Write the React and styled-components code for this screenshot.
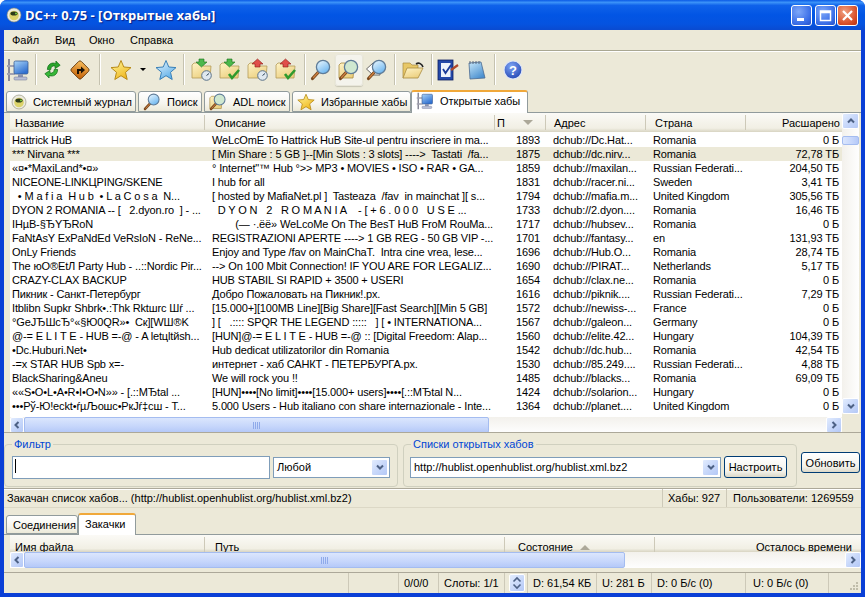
import React from 'react';
import styled, { createGlobalStyle } from 'styled-components';

const GlobalStyle = createGlobalStyle`
  html, body { margin: 0; padding: 0; overflow: hidden; background: #fff; }
  * { box-sizing: border-box; }
`;

const font = `"Liberation Sans", Arial, sans-serif`;
const columns = '195px 290px 51px 100px 100px 96px';

const hubs = [
  ['Hattrick HuB', 'WeLcOmE To Hattrick HuB Site-ul pentru inscriere in ma...', '1893', 'dchub://Dc.Hat...', 'Romania', '0 Б'],
  ['*** Nirvana ***', '[ Min Share : 5 GB ]--[Min Slots : 3 slots] ---->  Tastati  /fa...', '1875', 'dchub://dc.nirv...', 'Romania', '72,78 ТБ'],
  ['«¤•*MaxiLand*•¤»', '° Internet"™ Hub °>> MP3 • MOVIES • ISO • RAR • GA...', '1859', 'dchub://maxilan...', 'Russian Federati...', '204,50 ТБ'],
  ['NICEONE-LINKЦPING/SKENE', 'I hub for all', '1831', 'dchub://racer.ni...', 'Sweden', '3,41 ТБ'],
  ['  • M a f i a  H u b  • L a C o s a  N...', '[ hosted by MafiaNet.pl ]  Tasteaza  /fav  in mainchat ][ s...', '1794', 'dchub://mafia.m...', 'United Kingdom', '305,56 ТБ'],
  ['DYON 2 ROMANIA -- [   2.dyon.ro  ] - ...', '  D Y O N   2   R O M A N I A    - [ + 6 . 0 0 0   U S E ...', '1733', 'dchub://2.dyon....', 'Romania', '16,46 ТБ'],
  ['IHµB-§ЂYЂRoN', '        (— ·.ёё» WeLcoMe On The BesT HuB FroM RouMa...', '1717', 'dchub://hubsev...', 'Romania', '0 Б'],
  ['FaNtAsY ExPaNdEd VeRsIoN - ReNe...', 'REGISTRAZIONI APERTE ----> 1 GB REG - 50 GB VIP -...', '1701', 'dchub://fantasy...', 'en', '131,93 ТБ'],
  ['OnLy Friends', 'Enjoy and Type /fav on MainChaT.  Intra cine vrea, lese...', '1696', 'dchub://Hub.O...', 'Romania', '28,74 ТБ'],
  ['The юО®ЕtЛ Party Hub - ..::Nordic Pir...', '--> On 100 Mbit Connection! IF YOU ARE FOR LEGALIZ...', '1690', 'dchub://PIRAT...', 'Netherlands', '5,17 ТБ'],
  ['CRAZY-CLAX BACKUP', 'HUB STABIL SI RAPID + 3500 + USERI', '1654', 'dchub://clax.ne...', 'Romania', '0 Б'],
  ['Пикник - Санкт-Петербург', 'Добро Пожаловать на Пикник!.рх.', '1616', 'dchub://piknik....', 'Russian Federati...', '7,29 ТБ'],
  ['Itblibn Supkr Shbrk•.:Thk Rktшrc Шŕ ...', '[15.000+][100MB Line][Big Share][Fast Search][Min 5 GB]', '1572', 'dchub://newiss-...', 'France', '0 Б'],
  ['°GeJЂШcЂ°«§Ю0QR»•  Ск][WШ®K', '] [   .:::: SPQR THE LEGEND :::::   ] [ • INTERNATIONA...', '1567', 'dchub://galeon...', 'Germany', '0 Б'],
  ['@-= E L I T E - HUB =-@ - A letцltйsh...', '[HUN]@-= E L I T E - HUB =-@ :: [Digital Freedom: Alap...', '1560', 'dchub://elite.42...', 'Hungary', '104,39 ТБ'],
  ['•Dc.Huburi.Net•', 'Hub dedicat utilizatorilor din Romania', '1542', 'dchub://dc.hub...', 'Romania', '42,54 ТБ'],
  ['-=x STAR HUB Spb x=-', 'интернет - хаб САНКТ - ПЕТЕРБУРГА.рх.', '1530', 'dchub://85.249....', 'Russian Federati...', '4,88 ТБ'],
  ['BlackSharing&Aneu', 'We will rock you !!', '1485', 'dchub://blacks...', 'Romania', '69,09 ТБ'],
  ['««S•O•L•A•R•I•O•N»» - [.::MЂtal ...', '[HUN]••••[No limit]••••[15.000+ users]••••[.::MЂtal N...', '1424', 'dchub://solarion...', 'Hungary', '0 Б'],
  ['•••Pў-Ю!eckt•ŕµЉoшc•PкJŕ‡cш - T...', '5.000 Users - Hub italiano con share internazionale - Inte...', '1364', 'dchub://planet....', 'United Kingdom', '0 Б'],
];

/* window frame */
const Win = styled.div`
  width: 865px;
  height: 597px;
  display: flex;
  flex-direction: column;
  font: 11px ${font};
  color: #000;
  background: #0a3fd6;
  border-radius: 7px 7px 0 0;
  overflow: hidden;
`;
const TitleBar = styled.div`
  height: 30px;
  flex: none;
  display: flex;
  align-items: center;
  padding: 0 7px 0 6px;
  background: linear-gradient(180deg, #0a5ae6 0%, #3b92f8 8%, #0f62ea 18%, #0255e4 50%, #0553e0 80%, #0a4ad0 100%);
`;
const TitleText = styled.div`
  flex: 1;
  margin-left: 3px;
  font: bold 13px "Open Sans", sans-serif;
  color: #fff;
  text-shadow: 1px 1px 1px #0f1f80;
  white-space: nowrap;
`;
const WinBtn = styled.div`
  width: 21px;
  height: 21px;
  margin-left: ${p => p.$ml || 2}px;
  border: 1px solid #fff;
  border-radius: 3px;
  display: flex;
  align-items: center;
  justify-content: center;
  background: ${p => p.$close
    ? 'radial-gradient(circle at 35% 30%, #f0a080, #d8502a 65%, #b83010)'
    : 'radial-gradient(circle at 35% 30%, #7fa8f8, #3b6fe8 65%, #2650c8)'};
`;
const Client = styled.div`
  flex: 1;
  min-height: 0;
  margin: 0 4px 4px;
  background: #ece9d8;
  display: flex;
  flex-direction: column;
`;

/* menu and toolbar */
const MenuBar = styled.div`
  height: 21px;
  flex: none;
  display: flex;
  border-bottom: 1px solid #a9a792;
  box-shadow: 0 1px 0 #fff;
`;
const MenuItem = styled.div`
  width: ${p => p.$w}px;
  padding-left: ${p => p.$pl || 0}px;
  line-height: 20px;
`;
const ToolBar = styled.div`
  height: 39px;
  flex: none;
  padding-bottom: 2px;
  display: flex;
  align-items: center;
`;
const ToolBtn = styled.div`
  width: 28px;
  height: 32px;
  flex: none;
  display: flex;
  align-items: center;
  justify-content: center;
  border-radius: 3px;
  ${p => p.$hot && `
    background: #f4f3ec;
    box-shadow: inset 0 0 0 1px #e8e6da, 0 1px 1px #c8c6b6;
  `}
`;
const ToolSep = styled.div`
  width: 1px;
  height: 31px;
  flex: none;
  background: #c5c2b0;
  box-shadow: 1px 0 0 #fff;
  margin-left: ${p => p.$l}px;
  margin-right: ${p => p.$r}px;
`;
const DropMark = styled.div`
  width: 0;
  height: 0;
  flex: none;
  margin: 0 6px 0 5px;
  border-left: 3px solid transparent;
  border-right: 3px solid transparent;
  border-top: 3px solid #000;
`;

/* tabs */
const TabStrip = styled.div`
  height: ${p => p.$h || 23}px;
  flex: none;
  display: flex;
  align-items: flex-end;
  gap: 2px;
  padding-left: 2px;
  border-bottom: 1px solid #919b9c;
`;
const Tab = styled.div`
  width: ${p => p.$w}px;
  height: ${p => p.$h || (p.$active ? 23 : 21)}px;
  flex: none;
  display: flex;
  align-items: center;
  gap: ${p => p.$gap || 6}px;
  padding-left: ${p => p.$pl || 4}px;
  white-space: nowrap;
  border: 1px solid #919b9c;
  border-radius: 3px 3px 0 0;
  margin-left: ${p => (p.$active ? -2 : 0)}px;
  margin-bottom: ${p => (p.$active ? -1 : 0)}px;
  position: relative;
  background: ${p => (p.$active ? '#fff' : 'linear-gradient(180deg, #fff 0%, #f6f5ee 60%, #ece9d8 100%)')};
  ${p => p.$active && 'border-top: 2px solid #f0a83a; border-bottom: none; padding-bottom: 3px;'}
`;

/* list view */
const ListArea = styled.div`
  height: ${p => (p.$h ? `${p.$h}px` : 'auto')};
  flex: none;
  margin: 0 1px 0 6px;
  display: flex;
`;
const ListMain = styled.div`
  width: ${p => p.$w}px;
  flex: none;
  display: flex;
  flex-direction: column;
`;
const HeaderRow = styled.div`
  display: grid;
  grid-template-columns: ${p => p.$cols || columns};
  grid-auto-rows: ${p => (p.$clip ? 24 : p.$h || 19)}px;
  height: ${p => p.$h || 19}px;
  flex: none;
  background: linear-gradient(180deg, #fbfaf6 0%, #f1efe4 80%, #d8d4c2 100%);
  overflow: hidden;
`;
const HeaderCell = styled.div`
  display: flex;
  align-items: center;
  justify-content: ${p => (p.$right ? 'flex-end' : 'flex-start')};
  padding: 0 ${p => p.$pr || 0}px 0 ${p => p.$pl || 5}px;
  white-space: nowrap;
  border-right: ${p => (p.$last ? 'none' : '1px solid #cdc9b8')};
  margin: 2px 0;
`;
const SortMark = styled.span`
  width: 0;
  height: 0;
  margin-left: ${p => p.$ml || 7}px;
  border-left: 5px solid transparent;
  border-right: 5px solid transparent;
  ${p => (p.$up ? 'border-bottom: 5px solid #aca899;' : 'border-top: 5px solid #aca899;')}
`;
const Rows = styled.div`
  height: 285px;
  flex: none;
  background: #fff;
  padding-top: 1px;
`;
const Row = styled.div`
  display: grid;
  grid-template-columns: ${columns};
  height: 14px;
  background: ${p => (p.$sel ? '#ece9d8' : 'transparent')};
`;
const Cell = styled.div`
  line-height: 13px;
  letter-spacing: -0.14px;
  white-space: pre;
  overflow: hidden;
  text-align: ${p => (p.$right ? 'right' : 'left')};
  padding: 1px ${p => p.$pr || 0}px 0 ${p => p.$pl || 0}px;
`;

/* scrollbars */
const HScroll = styled.div`
  height: 16px;
  flex: none;
  display: flex;
  align-items: stretch;
  background: linear-gradient(180deg, #f3f1ec 0%, #fefefe 100%);
`;
const VScroll = styled.div`
  width: 17px;
  flex: none;
  display: flex;
  flex-direction: column;
  background: linear-gradient(90deg, #f3f1ec 0%, #fefefe 100%);
`;
const ScrollBtn = styled.div`
  width: ${p => p.$w || 16}px;
  height: 16px;
  flex: none;
  border: 1px solid #fff;
  border-radius: 2px;
  background: linear-gradient(135deg, #e2ecfe 0%, #c8d8fa 50%, #b4c8f6 100%);
  display: flex;
  align-items: center;
  justify-content: center;
`;
const Thumb = styled.div`
  flex: none;
  width: ${p => (p.$w ? `${p.$w}px` : '100%')};
  height: ${p => (p.$h ? `${p.$h}px` : '100%')};
  margin: ${p => p.$m || 0};
  border: 1px solid #a4bcf0;
  border-radius: 2px;
  background: ${p => (p.$v
    ? 'linear-gradient(90deg, #dbe6fd 0%, #c6d6fb 60%, #b5c9f8 100%)'
    : 'linear-gradient(180deg, #dbe6fd 0%, #c6d6fb 60%, #b5c9f8 100%)')};
  display: flex;
  align-items: center;
  justify-content: center;
  gap: 1px;
`;
const Grip = styled.i`
  width: 1px;
  height: 7px;
  background: #8faaea;
`;
const Fill = styled.div`
  flex: 1;
`;
const Corner = styled.div`
  height: 18px;
  flex: none;
  background: #ece9d8;
`;

/* filter panel */
const FilterPanel = styled.div`
  height: 56px;
  flex: none;
  display: flex;
  align-items: flex-start;
  padding-top: 11px;
  border-top: 1px solid #aca899;
`;
const GroupBox = styled.div`
  width: ${p => p.$w}px;
  height: 43px;
  flex: none;
  margin: 0 0 0 ${p => p.$ml || 0}px;
  padding: 0 0 0 ${p => p.$pl || 8}px;
  border: 1px solid #d0d0bf;
  border-radius: 4px;
  display: flex;
  align-items: center;
  position: relative;
`;
const Legend = styled.div`
  position: absolute;
  top: -7px;
  left: 7px;
  padding: 0 2px;
  background: #ece9d8;
  color: #0046d5;
  line-height: 13px;
`;
const TextInput = styled.div`
  width: 258px;
  height: 23px;
  flex: none;
  border: 1px solid #7f9db9;
  background: #fff;
  padding: 2px 0 0 2px;
  margin-top: 3px;
`;
const Caret = styled.div`
  width: 1px;
  height: 14px;
  background: #000;
`;
const Select = styled.div`
  width: ${p => p.$w}px;
  height: 21px;
  flex: none;
  margin-left: ${p => p.$ml || 0}px;
  margin-top: 3px;
  border: 1px solid #7f9db9;
  background: #fff;
  display: flex;
  align-items: center;
  padding-left: 3px;
  white-space: nowrap;
`;
const SelectText = styled.div`
  flex: 1;
`;
const SelectBtn = styled.div`
  width: 17px;
  height: 17px;
  margin-right: 1px;
  border: 1px solid #fff;
  border-radius: 2px;
  background: linear-gradient(135deg, #e2ecfe 0%, #c8d8fa 50%, #b4c8f6 100%);
  display: flex;
  align-items: center;
  justify-content: center;
`;
const Button = styled.div`
  width: ${p => p.$w}px;
  height: ${p => p.$h}px;
  flex: none;
  margin: ${p => p.$m || 0};
  border: 1px solid #003c74;
  border-radius: 3px;
  background: linear-gradient(180deg, #fff 0%, #f4f3ec 70%, #dcd8c8 100%);
  display: flex;
  align-items: center;
  justify-content: center;
`;

/* status bars */
const InfoBar = styled.div`
  height: 20px;
  flex: none;
  display: flex;
  align-items: center;
  border-top: 1px solid #aca899;
  box-shadow: inset 0 1px 0 #fff;
  border-bottom: 1px solid #dcd8c6;
`;
const StatusCell = styled.div`
  width: ${p => p.$w}px;
  height: 100%;
  flex: ${p => (p.$w ? 'none' : 1)};
  padding-left: ${p => p.$pl || 5}px;
  display: flex;
  align-items: center;
  white-space: nowrap;
  border-right: ${p => (p.$last ? 'none' : '1px solid #cdc9b8')};
`;
const SpinBox = styled.div`
  width: 16px;
  height: 18px;
  border: 1px solid #fff;
  border-radius: 2px;
  background: linear-gradient(135deg, #e2ecfe, #b4c8f6);
  display: flex;
  align-items: center;
  justify-content: center;
`;
const BottomBar = styled.div`
  height: 21px;
  flex: none;
  margin-top: auto;
  display: flex;
  border-top: 1px solid #aca899;
`;
const SizeGrip = styled.div`
  flex: 1;
  display: flex;
  align-items: flex-end;
  justify-content: flex-end;
  padding: 0 2px 2px 0;
`;
const IconWrap = styled.span`
  display: flex;
  flex: none;
`;

/* icons */
const Chevron = ({ dir = 'down' }) => {
  const d = {
    down: 'M2 3.5 L5 6.5 L8 3.5',
    up: 'M2 6.5 L5 3.5 L8 6.5',
    left: 'M6.5 2 L3.5 5 L6.5 8',
    right: 'M3.5 2 L6.5 5 L3.5 8',
  }[dir];
  return (
    <svg width="10" height="10" viewBox="0 0 10 10">
      <path d={d} fill="none" stroke="#4d6185" strokeWidth="2" />
    </svg>
  );
};

const SpinGlyph = () => (
  <svg width="10" height="14" viewBox="0 0 10 14">
    <path d="M1.5 5.5 L5 2 L8.5 5.5" fill="none" stroke="#4d6185" strokeWidth="1.6" />
    <path d="M1.5 8.5 L5 12 L8.5 8.5" fill="none" stroke="#4d6185" strokeWidth="1.6" />
  </svg>
);

const GripDots = () => (
  <svg width="12" height="12" viewBox="0 0 12 12">
    <path d="M9 3 h2 v2 h-2 z M6 6 h2 v2 h-2 z M9 6 h2 v2 h-2 z M3 9 h2 v2 h-2 z M6 9 h2 v2 h-2 z M9 9 h2 v2 h-2 z" fill="#c0bdaa" />
  </svg>
);

const Grad = ({ id, a, b }) => (
  <linearGradient id={id} x1="0" y1="0" x2="0.6" y2="1">
    <stop offset="0" stopColor={a} />
    <stop offset="1" stopColor={b} />
  </linearGradient>
);

const DcIcon = ({ size = 16 }) => (
  <svg width={size} height={size} viewBox="0 0 16 16">
    <circle cx="8" cy="8" r="7" fill="#eceade" stroke="#8a8a70" strokeWidth="0.6" />
    <circle cx="8" cy="8.5" r="4.8" fill="#dcd36a" />
    <ellipse cx="8" cy="6.5" rx="3.6" ry="2" fill="#2c3a1a" />
    <circle cx="10" cy="6.4" r="1" fill="#7ad040" />
  </svg>
);

const HubIcon = ({ size = 24 }) => (
  <svg width={size} height={size} viewBox="0 0 24 24">
    <defs><Grad id="hubg" a="#a8d4f8" b="#2f6fd0" /></defs>
    <rect x="2" y="1" width="2" height="22" fill="#8a8a98" />
    <rect x="1" y="7" width="8" height="2" fill="#a2a2b0" />
    <rect x="1" y="15" width="8" height="2" fill="#a2a2b0" />
    <rect x="8" y="3" width="14" height="13" rx="1.5" fill="url(#hubg)" stroke="#3a5a90" strokeWidth="0.8" />
    <rect x="12" y="16" width="5" height="3" fill="#8a94b0" />
    <rect x="8" y="19" width="13" height="3" rx="1" fill="#b9bfd6" stroke="#6a7290" strokeWidth="0.5" />
  </svg>
);

const RefreshIcon = () => (
  <svg width="17" height="19" viewBox="0 0 20 22">
    <path d="M4 11 C4 5 9 2 14 4 L14 1 L19 6 L13 10 L13 7 C10 6 8 8 8 11 Z" fill="#2aa52a" stroke="#0c6a16" strokeWidth="0.8" />
    <path d="M16 11 C16 17 11 20 6 18 L6 21 L1 16 L7 12 L7 15 C10 16 12 14 12 11 Z" fill="#38b838" stroke="#0c6a16" strokeWidth="0.8" />
  </svg>
);

const DiamondIcon = () => (
  <svg width="22" height="22" viewBox="0 0 22 22">
    <defs><Grad id="diag" a="#f8c060" b="#c86a10" /></defs>
    <rect x="4" y="4" width="14" height="14" rx="2" transform="rotate(45 11 11)" fill="url(#diag)" stroke="#5a3208" strokeWidth="0.8" />
    <path d="M8 15 L8 10 L12 10 L12 7.5 L16 11 L12 14.5 L12 12 L10 12 L10 15 Z" fill="#1a1208" />
  </svg>
);

const starPts = '11,1.5 13.8,8 21,8.6 15.5,13.3 17.2,20.5 11,16.7 4.8,20.5 6.5,13.3 1,8.6 8.2,8';
const StarIcon = ({ blue, size = 22 }) => (
  <svg width={size} height={size} viewBox="0 0 22 22">
    <defs>
      <Grad id="stary" a="#fff8a0" b="#f0b820" />
      <Grad id="starb" a="#e8f6ff" b="#60b0e8" />
    </defs>
    <polygon points={starPts} fill={`url(#${blue ? 'starb' : 'stary'})`} stroke={blue ? '#3a80b8' : '#b88a18'} strokeWidth="1" strokeLinejoin="round" />
  </svg>
);

const FolderIcon = ({ color, badge }) => (
  <svg width="22" height="24" viewBox="0 0 22 24">
    <defs><Grad id="foldg" a="#fff4c8" b="#ecd080" /></defs>
    <path d="M1 7 L1 20 L19 20 L20 8 L12 8 L10 5 L3 5 Z" fill="url(#foldg)" stroke="#b49a58" strokeWidth="0.8" />
    <path
      d={color === 'green' ? 'M8 1 L13 1 L13 4 L16 4 L10.5 9 L5 4 L8 4 Z' : 'M10.5 1 L16 6 L13 6 L13 9 L8 9 L8 6 L5 6 Z'}
      fill={color === 'green' ? '#4cb84c' : '#e0504a'}
      stroke={color === 'green' ? '#1a701a' : '#8a1a10'}
      strokeWidth="0.6"
    />
    {badge === 'clock' ? (
      <>
        <circle cx="15.5" cy="17.5" r="4.8" fill="#dfe8f0" stroke="#5a7288" strokeWidth="1" />
        <path d="M15.5 17.5 L18 15.5" stroke="#2a4258" strokeWidth="1" />
      </>
    ) : (
      <path d="M10 16 L13 20 L20 12" fill="none" stroke="#2e9a2e" strokeWidth="2.6" />
    )}
  </svg>
);

const MagIcon = ({ folder, eye, size = 22 }) => (
  <svg width={size} height={size} viewBox="0 0 22 22">
    <defs>
      <Grad id="foldg" a="#fff4c8" b="#ecd080" />
      <Grad id="glass" a="#f0faff" b="#70b8f0" />
    </defs>
    {folder && <path d="M1 6 L1 19 L15 19 L16 8 L9 8 L7 4 L3 4 Z" fill="url(#foldg)" stroke="#a88a40" strokeWidth="0.8" />}
    {eye && <path d="M0.5 10 L7 4 L14 4 L14 16 L7 16 Z" fill="#fff" stroke="#444" strokeWidth="0.8" />}
    <path d="M8.5 13 L2.5 19.5" stroke="#7a4a20" strokeWidth="3.2" strokeLinecap="round" />
    <path d="M8.5 13 L3.5 18.5" stroke="#d08040" strokeWidth="1.2" strokeLinecap="round" />
    <circle cx="13" cy="8" r="6.6" fill={folder ? '#cfe8d0' : 'url(#glass)'} stroke="#5f7c98" strokeWidth="1.3" />
  </svg>
);

const OpenFolderIcon = () => (
  <svg width="24" height="22" viewBox="0 0 24 22">
    <defs><Grad id="foldg" a="#fff4c8" b="#ecd080" /></defs>
    <path d="M2 4 L9 4 L11 6 L17 6 L17 9 L2 19 Z" fill="#e8c868" stroke="#a88a40" strokeWidth="0.7" />
    <path d="M2 19 L6 9 L22 9 L17 19 Z" fill="url(#foldg)" stroke="#a88a40" strokeWidth="0.8" />
    <path d="M15 5 C18 3 21 5 22 8" fill="none" stroke="#222" strokeWidth="1.6" />
  </svg>
);

const BoardIcon = () => (
  <svg width="24" height="22" viewBox="0 0 24 22">
    <rect x="2" y="1" width="15" height="20" fill="#2448a8" stroke="#101f60" strokeWidth="0.8" />
    <rect x="5" y="4" width="9.5" height="14" fill="#eef2fa" />
    <path d="M7 10 L9.5 14 L15 6" fill="none" stroke="#1a3a98" strokeWidth="1.8" />
    <path d="M15 11 L22 6" stroke="#b04828" strokeWidth="2.2" />
  </svg>
);

const NoteIcon = () => (
  <svg width="22" height="22" viewBox="0 0 22 22">
    <defs><Grad id="noteg" a="#c8e8fa" b="#4a90d0" /></defs>
    <path d="M4 4 L16 3 L20 19 L5 20 Z" fill="url(#noteg)" stroke="#4a6a90" strokeWidth="0.8" />
    <path d="M5 2 V5 M8 2 V5 M11 2 V5 M14 2 V5" stroke="#5a6a80" strokeWidth="1" />
  </svg>
);

const HelpIcon = () => (
  <svg width="20" height="20" viewBox="0 0 20 20">
    <defs>
      <radialGradient id="helpg" cx="0.4" cy="0.3" r="0.8">
        <stop offset="0" stopColor="#7ea4f4" />
        <stop offset="1" stopColor="#1c3fae" />
      </radialGradient>
    </defs>
    <circle cx="10" cy="10" r="9" fill="url(#helpg)" stroke="#dfe6f6" strokeWidth="1.2" />
    <text x="10" y="14.5" textAnchor="middle" fontFamily="Liberation Sans" fontWeight="bold" fontSize="13" fill="#fff">?</text>
  </svg>
);

const WindowGlyph = ({ kind }) => (
  <svg width="15" height="15" viewBox="0 0 15 15">
    {kind === 'min' && <rect x="3" y="10" width="7" height="3" fill="#fff" />}
    {kind === 'max' && <path d="M2.5 3 H12.5 V12.5 H2.5 Z M2.5 4.5 H12.5" fill="none" stroke="#fff" strokeWidth="1.5" />}
    {kind === 'close' && <path d="M3 3 L12 12 M12 3 L3 12" stroke="#fff" strokeWidth="2.2" />}
  </svg>
);

function App() {
  return (
    <Win>
      <GlobalStyle />
      <TitleBar>
        <DcIcon />
        <TitleText>DC++ 0.75 - [Открытые хабы]</TitleText>
        <WinBtn><WindowGlyph kind="min" /></WinBtn>
        <WinBtn $ml={3}><WindowGlyph kind="max" /></WinBtn>
        <WinBtn $close $ml={1}><WindowGlyph kind="close" /></WinBtn>
      </TitleBar>
      <Client>
        <MenuBar>
          <MenuItem $w={51} $pl={8}>Файл</MenuItem>
          <MenuItem $w={34}>Вид</MenuItem>
          <MenuItem $w={41}>Окно</MenuItem>
          <MenuItem $w={60}>Справка</MenuItem>
        </MenuBar>
        <ToolBar>
          <ToolBtn><HubIcon /></ToolBtn>
          <ToolSep $l={3} $r={2} />
          <ToolBtn><RefreshIcon /></ToolBtn>
          <ToolBtn><DiamondIcon /></ToolBtn>
          <ToolSep $l={5} $r={7} />
          <ToolBtn><StarIcon /></ToolBtn>
          <DropMark />
          <ToolBtn><StarIcon blue /></ToolBtn>
          <ToolSep $l={3} $r={4} />
          <ToolBtn><FolderIcon color="green" badge="clock" /></ToolBtn>
          <ToolBtn><FolderIcon color="green" badge="check" /></ToolBtn>
          <ToolBtn><FolderIcon color="red" badge="clock" /></ToolBtn>
          <ToolBtn><FolderIcon color="red" badge="check" /></ToolBtn>
          <ToolSep $l={4} $r={2} />
          <ToolBtn><MagIcon /></ToolBtn>
          <ToolBtn $hot><MagIcon folder /></ToolBtn>
          <ToolBtn><MagIcon eye /></ToolBtn>
          <ToolSep $l={3} $r={4} />
          <ToolBtn><OpenFolderIcon /></ToolBtn>
          <ToolSep $l={4} $r={2} />
          <ToolBtn><BoardIcon /></ToolBtn>
          <ToolBtn><NoteIcon /></ToolBtn>
          <ToolSep $l={4} $r={4} />
          <ToolBtn><HelpIcon /></ToolBtn>
        </ToolBar>
        <TabStrip>
          <Tab $w={130}><DcIcon /><span>Системный журнал</span></Tab>
          <Tab $w={64}><IconWrap><MagIcon size={18} /></IconWrap><span>Поиск</span></Tab>
          <Tab $w={86}><IconWrap><MagIcon folder size={18} /></IconWrap><span>ADL поиск</span></Tab>
          <Tab $w={119}><IconWrap><StarIcon size={18} /></IconWrap><span>Избранные хабы</span></Tab>
          <Tab $w={117} $active><IconWrap><HubIcon size={18} /></IconWrap><span>Открытые хабы</span></Tab>
        </TabStrip>
        <ListArea $h={319}>
          <ListMain $w={832}>
            <HeaderRow>
              <HeaderCell>Название</HeaderCell>
              <HeaderCell $pl={10}>Описание</HeaderCell>
              <HeaderCell $pl={2}>П<SortMark $ml={18} /></HeaderCell>
              <HeaderCell $pl={8}>Адрес</HeaderCell>
              <HeaderCell $pl={9}>Страна</HeaderCell>
              <HeaderCell $right $last $pr={2}>Расшарено</HeaderCell>
            </HeaderRow>
            <Rows>
              {hubs.map((h, i) => (
                <Row key={i} $sel={i === 1}>
                  <Cell $pl={2}>{h[0]}</Cell>
                  <Cell $pl={7}>{h[1]}</Cell>
                  <Cell $right $pr={6}>{h[2]}</Cell>
                  <Cell $pl={7}>{h[3]}</Cell>
                  <Cell $pl={7}>{h[4]}</Cell>
                  <Cell $right $pr={3}>{h[5]}</Cell>
                </Row>
              ))}
            </Rows>
            <HScroll>
              <ScrollBtn $w={14}><Chevron dir="left" /></ScrollBtn>
              <Thumb $w={465}><Grip /><Grip /><Grip /><Grip /></Thumb>
              <Fill />
              <ScrollBtn><Chevron dir="right" /></ScrollBtn>
            </HScroll>
          </ListMain>
          <VScroll>
            <ScrollBtn $w={17}><Chevron dir="up" /></ScrollBtn>
            <Thumb $v $h={9} $m="7px 0 0" />
            <Fill />
            <ScrollBtn $w={17}><Chevron dir="down" /></ScrollBtn>
            <Corner />
          </VScroll>
        </ListArea>
        <FilterPanel>
          <GroupBox $w={394} $pl={7}>
            <Legend>Фильтр</Legend>
            <TextInput><Caret /></TextInput>
            <Select $w={117} $ml={3}>
              <SelectText>Любой</SelectText>
              <SelectBtn><Chevron /></SelectBtn>
            </Select>
          </GroupBox>
          <GroupBox $w={394} $ml={5} $pl={6}>
            <Legend>Списки открытых хабов</Legend>
            <Select $w={311}>
              <SelectText>http://hublist.openhublist.org/hublist.xml.bz2</SelectText>
              <SelectBtn><Chevron /></SelectBtn>
            </Select>
            <Button $w={63} $h={22} $m="3px 0 0 3px">Настроить</Button>
          </GroupBox>
          <Button $w={59} $h={21} $m="8px 0 0 4px">Обновить</Button>
        </FilterPanel>
        <InfoBar>
          <StatusCell $pl={3}>Закачан список хабов... (http://hublist.openhublist.org/hublist.xml.bz2)</StatusCell>
          <StatusCell $w={64}>Хабы: 927</StatusCell>
          <StatusCell $w={134} $pl={6} $last>Пользователи: 1269559</StatusCell>
        </InfoBar>
        <TabStrip $h={27}>
          <Tab $w={72} $h={19} $pl={6}>Соединения</Tab>
          <Tab $w={58} $h={22} $active $pl={6}>Закачки</Tab>
        </TabStrip>
        <ListArea>
          <ListMain $w={851}>
            <HeaderRow $h={17} $clip $cols="195px 300px 150px 201px">
              <HeaderCell>Имя файла</HeaderCell>
              <HeaderCell $pl={10}>Путь</HeaderCell>
              <HeaderCell $pl={13}>Состояние<SortMark $up /></HeaderCell>
              <HeaderCell $right $pr={4} $last>Осталось времени</HeaderCell>
            </HeaderRow>
            <HScroll>
              <ScrollBtn $w={14}><Chevron dir="left" /></ScrollBtn>
              <Thumb $w={601}><Grip /><Grip /><Grip /><Grip /></Thumb>
              <Fill />
              <ScrollBtn><Chevron dir="right" /></ScrollBtn>
            </HScroll>
          </ListMain>
        </ListArea>
        <BottomBar>
          <StatusCell $w={345} />
          <StatusCell $w={50} />
          <StatusCell $w={40}>0/0/0</StatusCell>
          <StatusCell $w={66}>Слоты: 1/1</StatusCell>
          <StatusCell $w={23} $pl={4}><SpinBox><SpinGlyph /></SpinBox></StatusCell>
          <StatusCell $w={69}>D: 61,54 КБ</StatusCell>
          <StatusCell $w={55}>U: 281 Б</StatusCell>
          <StatusCell $w={94}>D: 0 Б/с (0)</StatusCell>
          <StatusCell $w={83} $pl={7}>U: 0 Б/с (0)</StatusCell>
          <SizeGrip><GripDots /></SizeGrip>
        </BottomBar>
      </Client>
    </Win>
  );
}

export default App;
